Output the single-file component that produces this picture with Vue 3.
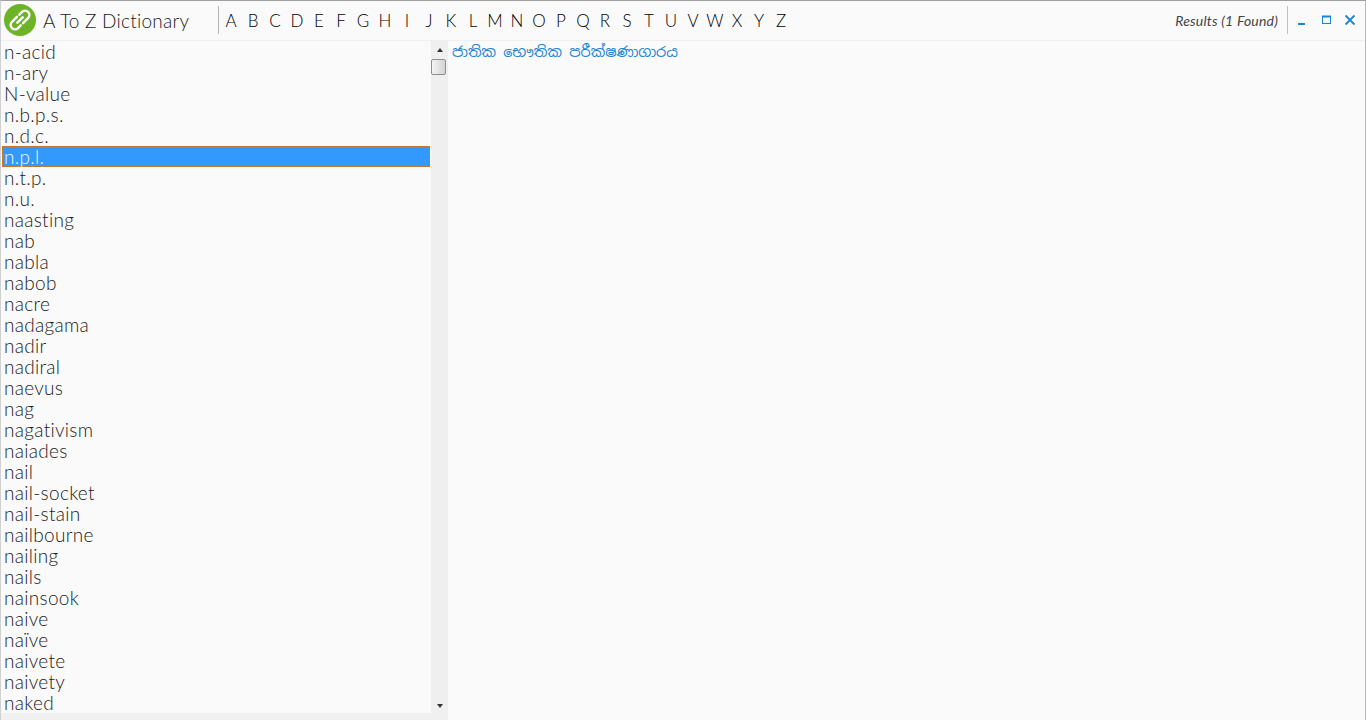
<script setup>
const letters = 'ABCDEFGHIJKLMNOPQRSTUVWXYZ'.split('')
const words = [
  'n-acid', 'n-ary', 'N-value', 'n.b.p.s.', 'n.d.c.', 'n.p.l.', 'n.t.p.', 'n.u.',
  'naasting', 'nab', 'nabla', 'nabob', 'nacre', 'nadagama', 'nadir', 'nadiral',
  'naevus', 'nag', 'nagativism', 'naiades', 'nail', 'nail-socket', 'nail-stain',
  'nailbourne', 'nailing', 'nails', 'nainsook', 'naive', 'naïve', 'naivete',
  'naivety', 'naked'
]
const selected = 'n.p.l.'
</script>

<template>
  <div class="window">
    <header class="topbar">
      <div class="brand">
        <span class="logo">
          <svg viewBox="0 0 24 24" width="26" height="26" fill="none" stroke="#fff" stroke-width="2.3" stroke-linecap="round">
            <g transform="rotate(-45 12 12)">
              <path d="M12 8H5.500a4 4 0 0 0 0 8H9" />
              <path d="M12 16h6.500a4 4 0 0 0 0-8H15" />
              <path d="M8.500 12h7" />
            </g>
          </svg>
        </span>
        <span class="title">A To Z Dictionary</span>
      </div>
      <nav class="letters">
        <a v-for="l in letters" :key="l" class="letter">{{ l }}</a>
      </nav>
      <div class="results">Results (1 Found)</div>
      <div class="controls">
        <svg class="ctl" viewBox="0 0 12 12" width="12" height="12"><rect x="1" y="9" width="7" height="2" fill="#1c84d4" /></svg>
        <svg class="ctl" viewBox="0 0 12 12" width="12" height="12" fill="none" stroke="#1c84d4"><rect x="1.500" y="2.500" width="8" height="7" /><path d="M1 2.500h9" stroke-width="2" /></svg>
        <svg class="ctl" viewBox="0 0 12 12" width="12" height="12" fill="none" stroke="#1c84d4" stroke-width="1.800"><path d="M1.500 1.500l9 9M10.500 1.500l-9 9" /></svg>
      </div>
    </header>
    <main class="body">
      <section class="listpane">
        <div class="listwrap">
          <ul class="list">
            <li v-for="w in words" :key="w" class="item" :class="{ active: w === selected }">{{ w }}</li>
          </ul>
          <div class="scrollbar">
            <span class="arrow up"></span>
            <span class="thumb"></span>
            <span class="spacer"></span>
            <span class="arrow down"></span>
          </div>
        </div>
        <div class="hbar"></div>
      </section>
      <section class="detail">
        <p class="meaning">ජාතික භෞතික පරීක්ෂණාගාරය</p>
      </section>
    </main>
  </div>
</template>

<style>
html, body { margin: 0; height: 100%; overflow: hidden; background: #fafafa; }
</style>

<style scoped>
.window {
  width: 1366px;
  height: 720px;
  box-sizing: border-box;
  display: flex;
  flex-direction: column;
  background: #fafafa;
  border-top: 1px solid #a0a0a0;
  border-left: 1px solid #d0d0d0;
  border-right: 1px solid #b8b8b8;
  font-family: "Lato", "Liberation Sans", sans-serif;
  color: #333;
}
.topbar {
  height: 40px;
  flex: none;
  box-sizing: border-box;
  padding-bottom: 1px;
  display: flex;
  align-items: center;
  border-bottom: 1px solid #efefef;
}
.brand {
  width: 217px;
  box-sizing: border-box;
  padding-left: 3px;
  display: flex;
  align-items: center;
  gap: 7px;
}
.logo {
  width: 32px;
  height: 32px;
  border-radius: 50%;
  background: #6cb326;
  display: flex;
  align-items: center;
  justify-content: center;
}
.title { font-size: 19px; font-weight: 300; letter-spacing: 0.25px; color: #1a1a1a; }
.letters {
  height: 28px;
  display: flex;
  align-items: center;
  border-left: 1px solid #b4b4b4;
  padding-left: 1px;
}
.letter { width: 22px; text-align: center; font-size: 17px; font-weight: 300; color: #000; }
.results { margin-left: auto; font-size: 14px; font-style: italic; letter-spacing: 0.2px; color: #444; padding-right: 9px; }
.controls {
  height: 28px;
  width: 78px;
  box-sizing: border-box;
  display: flex;
  align-items: center;
  gap: 11.5px;
  padding-left: 9px;
  border-left: 1px solid #c0c0c0;
}
.body { flex: 1; min-height: 0; display: flex; }
.listpane { width: 447px; flex: none; display: flex; flex-direction: column; }
.listwrap { flex: 1; min-height: 0; display: flex; }
.list {
  flex: 1;
  margin: 0 1px 0 0;
  padding: 0 0 0 1px;
  list-style: none;
  overflow: hidden;
}
.item {
  height: 21px;
  line-height: 21px;
  padding-left: 2px;
  font-size: 19px;
  font-weight: 300;
  letter-spacing: 0.3px;
  color: #1a1a1a;
  box-sizing: border-box;
}
.item.active {
  background: #3399ff;
  color: #f2f8ff;
  line-height: 19px;
  border: 1px solid #c47a2c;
  padding-left: 1px;
}
.scrollbar {
  width: 17px;
  flex: none;
  background: #efefef;
  display: flex;
  flex-direction: column;
  align-items: center;
}
.arrow { width: 0; height: 0; border-left: 3px solid transparent; border-right: 3px solid transparent; }
.arrow.up { margin-top: 7px; border-bottom: 4px solid #333; }
.arrow.down { margin-bottom: 5px; border-top: 4px solid #333; }
.thumb {
  margin-top: 7px;
  align-self: flex-start;
  width: 15px;
  height: 16px;
  box-sizing: border-box;
  border: 1px solid #8e8e8e;
  border-radius: 2px;
  background: linear-gradient(90deg, #f3f3f3, #d4d4d4);
}
.spacer { flex: 1; }
.hbar { height: 7px; flex: none; background: #f0f0f0; }
.detail { flex: 1; }
.meaning {
  margin: 1px 0 0 4px;
  font-size: 14.4px;
  color: #1c84d4;
  font-family: "Noto Sans Sinhala", "Lato", sans-serif;
}
</style>
